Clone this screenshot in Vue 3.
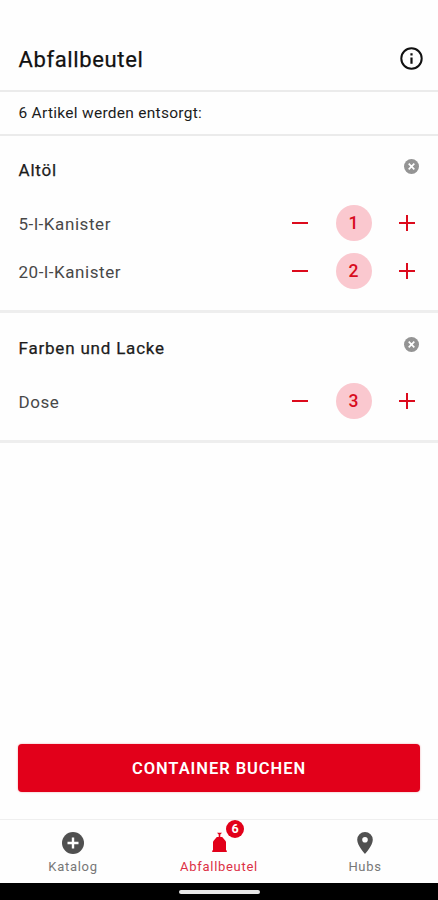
<script setup>
import { computed, ref } from 'vue';

const groups = ref([
  {
    name: 'Altöl',
    items: [
      { name: '5-l-Kanister', count: 1 },
      { name: '20-l-Kanister', count: 2 }
    ]
  },
  {
    name: 'Farben und Lacke',
    items: [{ name: 'Dose', count: 3 }]
  }
]);

const total = computed(() =>
  groups.value.reduce((sum, g) => sum + g.items.reduce((s, i) => s + i.count, 0), 0)
);

const decrease = (item) => {
  if (item.count > 0) item.count--;
};
const increase = (item) => item.count++;
const removeGroup = (index) => groups.value.splice(index, 1);
</script>

<template>
  <div class="screen">
    <header class="header">
      <h1 class="title">Abfallbeutel</h1>
      <button class="icon-btn" aria-label="Info">
        <svg width="23" height="23" viewBox="0 0 23 23">
          <circle cx="11.5" cy="11.5" r="10.2" fill="none" stroke="#111" stroke-width="2" />
          <path d="M11.5 10.4v6.4M11.5 6.2v2.2" stroke="#111" stroke-width="2.2" />
        </svg>
      </button>
    </header>

    <p class="summary">{{ total }} Artikel werden entsorgt:</p>

    <section v-for="(group, index) in groups" :key="group.name" class="group">
      <div class="group-head">
        <h2 class="group-name">{{ group.name }}</h2>
        <button class="icon-btn remove-btn" aria-label="Entfernen" @click="removeGroup(index)">
          <svg width="15" height="15" viewBox="0 0 15 15">
            <circle cx="7.5" cy="7.5" r="7.5" fill="#949494" />
            <path d="M4.7 4.7l5.6 5.6M10.3 4.7l-5.6 5.6" stroke="#fff" stroke-width="1.7" />
          </svg>
        </button>
      </div>

      <div v-for="item in group.items" :key="item.name" class="item">
        <span class="item-name">{{ item.name }}</span>
        <div class="stepper">
          <button class="icon-btn" aria-label="Weniger" @click="decrease(item)">
            <svg width="16" height="16" viewBox="0 0 16 16">
              <path d="M0 8h16" stroke="#dc0a1c" stroke-width="2" />
            </svg>
          </button>
          <span class="count">{{ item.count }}</span>
          <button class="icon-btn" aria-label="Mehr" @click="increase(item)">
            <svg width="16" height="16" viewBox="0 0 16 16">
              <path d="M0 8h16M8 0v16" stroke="#dc0a1c" stroke-width="2" />
            </svg>
          </button>
        </div>
      </div>
    </section>

    <div class="spacer"></div>

    <button class="book-btn">CONTAINER BUCHEN</button>

    <nav class="tabs">
      <a class="tab">
        <svg width="22" height="22" viewBox="0 0 22 22">
          <circle cx="11" cy="11" r="11" fill="#505050" />
          <path d="M5.5 11h11M11 5.5v11" stroke="#fff" stroke-width="2.4" />
        </svg>
        <span class="tab-label">Katalog</span>
      </a>
      <a class="tab active">
        <span class="bag">
          <svg width="22" height="22" viewBox="0 0 22 22">
            <path d="M5 20V9.4L8.8 5h5.4L18 9.4V20z" fill="#e2001a" />
            <path d="M4.2 18.4h14.6V20H4.2z" fill="#e2001a" />
            <path d="M9 .8h5l-1.7 1.6V5.4h-1.6V2.4z" fill="#e2001a" />
          </svg>
          <span class="badge">{{ total }}</span>
        </span>
        <span class="tab-label">Abfallbeutel</span>
      </a>
      <a class="tab">
        <svg width="22" height="22" viewBox="0 0 22 22">
          <path
            fill-rule="evenodd"
            d="M11 0a7.8 7.8 0 0 0-7.8 7.8C3.2 13.6 11 22 11 22s7.8-8.4 7.8-14.2A7.8 7.8 0 0 0 11 0zm0 5a2.8 2.8 0 1 1 0 5.6A2.8 2.8 0 0 1 11 5z"
            fill="#505050"
          />
        </svg>
        <span class="tab-label">Hubs</span>
      </a>
    </nav>

    <div class="system-bar">
      <span class="home-pill"></span>
    </div>
  </div>
</template>

<style>
body {
  background: #fff;
}
</style>

<style scoped>
.screen {
  display: flex;
  flex-direction: column;
  height: 900px;
  overflow: hidden;
  background: #fefefe;
  font-family: Roboto, sans-serif;
  color: #1c1c1c;
}

.header {
  display: flex;
  justify-content: space-between;
  align-items: center;
  box-sizing: border-box;
  height: 92px;
  padding: 27px 15px 0 18.5px;
  border-bottom: 2px solid #ebebeb;
}

.title {
  margin: 2px 0 0;
  font-size: 22px;
  font-weight: 400;
  letter-spacing: 0.63px;
  color: #111;
  -webkit-text-stroke: 0.25px #111;
}

.icon-btn {
  display: flex;
  padding: 0;
  border: none;
  background: none;
  cursor: pointer;
}

.summary {
  box-sizing: border-box;
  height: 44px;
  margin: 0;
  padding-left: 18.5px;
  border-bottom: 2px solid #ebebeb;
  font-size: 15.5px;
  line-height: 42px;
  letter-spacing: 0.28px;
}

.group {
  padding: 18px 19px 15px 18.5px;
  border-bottom: 3px solid #eee;
}

.group + .group {
  padding-top: 19px;
}

.group-head {
  display: flex;
  justify-content: space-between;
  height: 33px;
  margin-bottom: 12px;
}

.group-name {
  margin: 0;
  font-size: 17px;
  font-weight: 400;
  line-height: 33px;
  letter-spacing: 0.8px;
  -webkit-text-stroke: 0.25px #1c1c1c;
}

.remove-btn {
  align-self: flex-start;
  margin-top: 5px;
}

.item {
  display: flex;
  justify-content: space-between;
  align-items: center;
  height: 48px;
}

.item-name {
  margin-top: 1px;
  font-size: 17px;
  letter-spacing: 0.57px;
  color: #484848;
}

.stepper {
  display: flex;
  align-items: center;
  gap: 27.5px;
  margin-right: 4px;
}

.count {
  width: 36px;
  height: 36px;
  border-radius: 50%;
  background: #fac8cf;
  color: #d80c20;
  font-size: 17.5px;
  font-weight: 500;
  line-height: 37px;
  text-align: center;
}

.spacer {
  flex: 1;
}

.book-btn {
  height: 48px;
  margin: 0 18px 27.5px;
  padding: 1px 0 0;
  border: none;
  border-radius: 4px;
  background: #e2001a;
  box-shadow: 0 0 2px rgba(226, 0, 26, 0.4);
  color: #fff;
  font-family: inherit;
  font-size: 16.5px;
  font-weight: 600;
  letter-spacing: 0.95px;
  cursor: pointer;
}

.tabs {
  display: flex;
  box-sizing: border-box;
  height: 64px;
  border-top: 1px solid #efefef;
}

.tab {
  display: flex;
  flex: 1;
  flex-direction: column;
  align-items: center;
  padding-top: 12px;
  color: #777;
}

.tab-label {
  margin-top: 4px;
  font-size: 13px;
  line-height: 17px;
  letter-spacing: 0.7px;
}

.tab.active {
  color: #dc3045;
}

.bag {
  position: relative;
  height: 22px;
}

.badge {
  position: absolute;
  top: -12px;
  left: 18px;
  width: 18px;
  height: 18px;
  border-radius: 50%;
  background: #e2001a;
  color: #fff;
  font-size: 12.5px;
  font-weight: 700;
  line-height: 18px;
  text-align: center;
}

.system-bar {
  display: flex;
  justify-content: center;
  align-items: center;
  height: 17px;
  background: #000;
}

.home-pill {
  width: 81px;
  height: 4px;
  margin-top: 1px;
  border-radius: 2px;
  background: #e8e8e8;
}
</style>
